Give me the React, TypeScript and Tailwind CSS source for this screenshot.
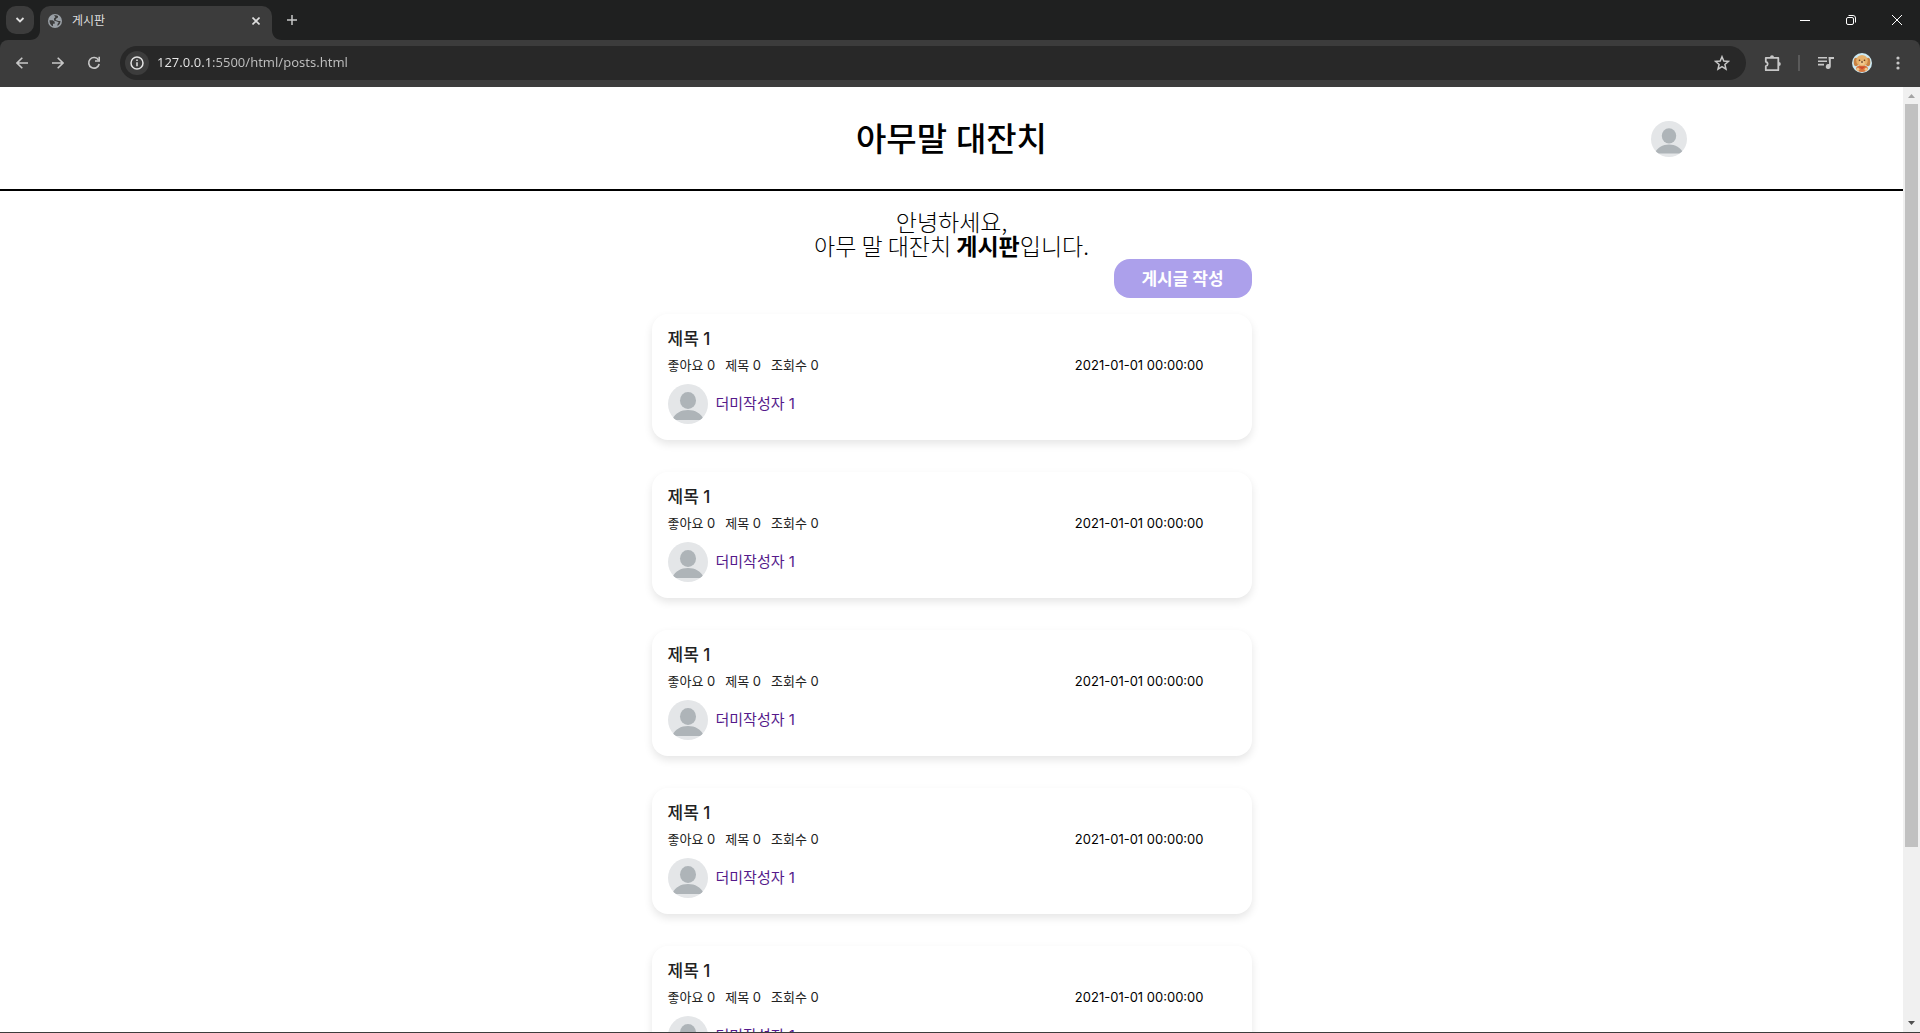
import React from "react";

function Avatar({ className }: { className: string }) {
  return (
    <svg viewBox="0 0 40 40" className={className} aria-hidden="true">
      <defs>
        <clipPath id="avatar-clip">
          <circle cx="20" cy="20" r="20" />
        </clipPath>
      </defs>
      <g clipPath="url(#avatar-clip)">
        <rect width="40" height="40" fill="#e4e6e8" />
        <ellipse cx="20" cy="16.5" rx="8" ry="8.5" fill="#aeb4b8" />
        <path d="M4 36C7 29 13 26 20 26s13 3 16 10z" fill="#aeb4b8" />
      </g>
    </svg>
  );
}

function TabStrip() {
  return (
    <div className="flex h-10 items-center bg-[#1f2020] pl-1.5 text-[#dedede]">
      <button aria-label="Search tabs" className="flex h-7 w-7 items-center justify-center rounded-[10px] bg-[#3c3c3c]">
        <svg width="10" height="10" viewBox="0 0 10 10" fill="none" stroke="currentColor" strokeWidth="1.8">
          <path d="M1.5 3l3.5 3.5L8.5 3" />
        </svg>
      </button>
      <div className="flex h-10 items-end">
        <svg width="10" height="10" viewBox="0 0 10 10" className="-ml-1">
          <path d="M10 0v10H0C6 10 10 6 10 0z" fill="#3c3c3c" />
        </svg>
        <div className="flex h-[34px] w-[232px] items-center rounded-t-[10px] bg-[#3c3c3c] px-2 pb-1">
          <svg width="14" height="14" viewBox="0 0 14 14">
            <circle cx="7" cy="7" r="7" fill="#9aa0a6" />
            <path d="M1.500 6.200h3.200l2 1.500v2H5v2.600C2.800 11.500 1.200 9 1.500 6.200zM6 1.500C7 1 9 1.200 10 2v1.500L8.300 4.500 7.500 6 10.500 7h2c0 2-1.200 4-3 5V10l1.300-1.500L9 7.500 6 6.500V4.500L7.500 3z" fill="#3c3c3c" />
          </svg>
          <span className="ml-2.5 flex-1 text-xs">게시판</span>
          <button aria-label="Close tab" className="flex h-4 w-4 items-center justify-center">
            <svg width="8" height="8" viewBox="0 0 8 8" stroke="currentColor" strokeWidth="1.6">
              <path d="M.5.5l7 7M7.5.5l-7 7" />
            </svg>
          </button>
        </div>
        <svg width="10" height="10" viewBox="0 0 10 10">
          <path d="M0 0v10h10C4 10 0 6 0 0z" fill="#3c3c3c" />
        </svg>
      </div>
      <button aria-label="New tab" className="-ml-1 flex h-7 w-7 items-center justify-center text-[#c7c7c7]">
        <svg width="12" height="12" viewBox="0 0 12 12" stroke="currentColor" strokeWidth="1.5">
          <path d="M6 1v10M1 6h10" />
        </svg>
      </button>
      <div className="ml-auto flex h-full text-white">
        <button aria-label="Minimize" className="flex w-[46px] items-center justify-center">
          <svg width="10" height="10" viewBox="0 0 10 10" stroke="currentColor"><path d="M0 5.5h10" /></svg>
        </button>
        <button aria-label="Restore" className="flex w-[46px] items-center justify-center">
          <svg width="10" height="10" viewBox="0 0 10 10" fill="none" stroke="currentColor">
            <rect x=".5" y="2.5" width="7" height="7" rx="1.5" />
            <path d="M2.5.5H7A2.500 2.500 0 0 1 9.500 3v4.500" />
          </svg>
        </button>
        <button aria-label="Close" className="flex w-[46px] items-center justify-center">
          <svg width="10" height="10" viewBox="0 0 10 10" stroke="currentColor"><path d="M0 0l10 10M10 0L0 10" /></svg>
        </button>
      </div>
    </div>
  );
}

function PuppyIcon() {
  return (
    <svg width="20" height="20" viewBox="0 0 20 20">
      <defs><clipPath id="puppy-clip"><circle cx="10" cy="10" r="10" /></clipPath></defs>
      <g clipPath="url(#puppy-clip)">
        <rect width="20" height="20" fill="#cdeaf3" />
        <ellipse cx="10" cy="15.500" rx="6" ry="3.500" fill="#d9783f" />
        <ellipse cx="4" cy="9" rx="2.300" ry="4.300" fill="#c98242" />
        <ellipse cx="16" cy="9" rx="2.300" ry="4.300" fill="#c98242" />
        <ellipse cx="10" cy="7.500" rx="5.800" ry="5.500" fill="#e8b26c" />
        <ellipse cx="10" cy="10" rx="2.800" ry="2.200" fill="#f0c78c" />
        <circle cx="7.500" cy="7.300" r=".8" fill="#5a3520" />
        <circle cx="12.500" cy="7.300" r=".8" fill="#5a3520" />
        <ellipse cx="10" cy="9" rx="1.100" ry=".8" fill="#5a3520" />
        <path d="M6.500 13.500l3.500 3 3.500-3z" fill="#cf4a2c" />
        <circle cx="5.800" cy="16.300" r="1.600" fill="#f0c78c" />
        <circle cx="14.200" cy="16.300" r="1.600" fill="#f0c78c" />
      </g>
    </svg>
  );
}

function Toolbar() {
  return (
    <div className="bg-[#1f2020]">
      <div className="flex h-[47px] items-center rounded-t-lg bg-[#3c3c3c] pr-3 pb-px pl-1 text-[#c7c7c7]">
        <button aria-label="Back" className="flex w-9 justify-center">
          <svg width="12" height="12" viewBox="0 0 12 12" fill="none" stroke="currentColor" strokeWidth="1.6"><path d="M12 6H1M6.300.7L1 6l5.300 5.300" /></svg>
        </button>
        <button aria-label="Forward" className="flex w-9 justify-center">
          <svg width="12" height="12" viewBox="0 0 12 12" fill="none" stroke="currentColor" strokeWidth="1.6"><path d="M0 6h11M5.700.7L11 6l-5.300 5.300" /></svg>
        </button>
        <button aria-label="Reload" className="flex w-9 justify-center">
          <svg width="14" height="14" viewBox="0 0 14 14" fill="none" stroke="currentColor" strokeWidth="1.6">
            <path d="M11.500 4A5.300 5.300 0 1 0 12.200 8" />
            <path d="M12.200.8v4.200H8" />
          </svg>
        </button>
        <div className="ml-2 flex h-[34px] flex-1 items-center rounded-full bg-[#282828] pr-4 pl-[5px]">
          <button aria-label="Site information" className="flex h-6 w-6 items-center justify-center rounded-full bg-[#3c3c3c]">
            <svg width="14" height="14" viewBox="0 0 14 14" fill="none" stroke="#e3e3e3" strokeWidth="1.5">
              <circle cx="7" cy="7" r="6" /><path d="M7 6.300v4M7 3.500V5" />
            </svg>
          </button>
          <input
            aria-label="Address"
            readOnly
            value="127.0.0.1:5500/html/posts.html"
            className="ml-2 min-w-0 flex-1 bg-[linear-gradient(to_right,#e8e8e8_55px,#c0c0c0_55px)] bg-clip-text font-['Noto_Sans',sans-serif] text-[13px] text-transparent outline-none"
          />
          <button aria-label="Bookmark">
            <svg width="16" height="16" viewBox="0 0 16 16" fill="none" stroke="currentColor" strokeWidth="1.5">
              <path d="M8 1.700l1.800 4.300 4.700.4-3.600 3.100 1.100 4.600L8 11.700l-4 2.400 1.100-4.600L1.500 6.400 6.200 6z" />
            </svg>
          </button>
        </div>
        <div className="ml-[18px] flex items-center">
          <button aria-label="Extensions">
            <svg width="18" height="18" viewBox="0 0 18 18" fill="none" stroke="currentColor" strokeWidth="1.8">
              <path d="M1.800 3.800h12.500v12.400H1.800v-4c2.500-.4 2.500-4 0-4.400z" strokeLinejoin="round" />
              <path d="M6 3.300a2 2 0 0 1 4 0zM14.800 8a2 2 0 0 1 0 4z" fill="currentColor" stroke="none" />
            </svg>
          </button>
          <span className="ml-4 h-4 w-0.5 bg-[#5a5a5a]" />
          <button aria-label="Media controls" className="ml-[18px]">
            <svg width="16" height="14" viewBox="0 0 16 14" fill="currentColor">
              <path d="M0 1h9v1.600H0zM0 4.400h9V6H0zM0 7.800h6v1.600H0zM10.500 1H16v2h-3.200v7.500a2.500 2.500 0 1 1-1.700-2.400z" />
            </svg>
          </button>
          <button aria-label="Profile" className="ml-[18px]"><PuppyIcon /></button>
          <button aria-label="Menu" className="ml-4 flex w-5 justify-center">
            <svg width="4" height="14" viewBox="0 0 4 14" fill="currentColor"><circle cx="2" cy="2" r="1.600" /><circle cx="2" cy="7" r="1.600" /><circle cx="2" cy="12" r="1.600" /></svg>
          </button>
        </div>
      </div>
    </div>
  );
}

function PostCard() {
  return (
    <article className="rounded-2xl bg-white px-4 pt-[13px] pb-4 shadow-[0_4px_8px_rgba(0,0,0,0.1)]">
      <h2 className="text-[17px] leading-6 font-medium text-[#222]">제목 1</h2>
      <div className="mt-0.5 flex justify-between pr-8 text-[13px] leading-6">
        <ul className="flex gap-2.5 text-[#222]">
          <li>좋아요 0</li>
          <li>제목 0</li>
          <li>조회수 0</li>
        </ul>
        <time className="text-black">2021-01-01 00:00:00</time>
      </div>
      <a href="#" className="mt-[7px] flex items-center gap-2 text-[15px] leading-5 text-[#551a8b]">
        <Avatar className="h-10 w-10" />
        더미작성자 1
      </a>
    </article>
  );
}

function Scrollbar() {
  return (
    <div className="flex w-[17px] shrink-0 flex-col items-center bg-[#f0f0f0]" aria-hidden="true">
      <svg width="17" height="17" viewBox="0 0 17 17"><path d="M5 11h7L8.500 7z" fill="#a3a3a3" /></svg>
      <div className="w-[13px] grow-[743] bg-[#c1c1c1]" />
      <div className="grow-[168]" />
      <svg width="17" height="17" viewBox="0 0 17 17"><path d="M5 6h7l-3.500 4z" fill="#505050" /></svg>
    </div>
  );
}

export default function App() {
  return (
    <div className="flex h-screen flex-col overflow-hidden border-b border-[#3c3c3c] bg-white font-['Inter','Noto_Sans_CJK_KR',sans-serif]">
      <div className="font-['Open_Sans','Noto_Sans_CJK_KR',sans-serif]">
        <TabStrip />
        <Toolbar />
      </div>
      <div className="flex min-h-0 flex-1">
        <div className="min-w-0 flex-1 overflow-hidden text-black">
          <header className="grid grid-cols-3 items-center border-b-2 border-black px-[216px] pt-[29px] pb-[27px]">
            <span />
            <h1 className="text-center text-[33px] leading-[46px] font-medium">아무말 대잔치</h1>
            <a href="#" aria-label="Profile" className="justify-self-end"><Avatar className="h-9 w-9" /></a>
          </header>
          <main className="mx-auto w-[600px] pt-[18px]">
            <p className="pb-0.5 text-center font-['Noto_Sans_CJK_KR',sans-serif] text-[23px] leading-6 font-light">
              안녕하세요,
              <br />
              아무 말 대잔치 <strong className="font-bold">게시판</strong>입니다.
            </p>
            <div className="flex justify-end">
              <button className="h-[39px] w-[138px] rounded-2xl bg-[#aca0eb] pt-0.5 text-[17px] font-bold text-white">게시글 작성</button>
            </div>
            <div className="mt-4 flex flex-col gap-8">
              {[1, 2, 3, 4, 5].map((n) => (
                <PostCard key={n} />
              ))}
            </div>
          </main>
        </div>
        <Scrollbar />
      </div>
    </div>
  );
}
